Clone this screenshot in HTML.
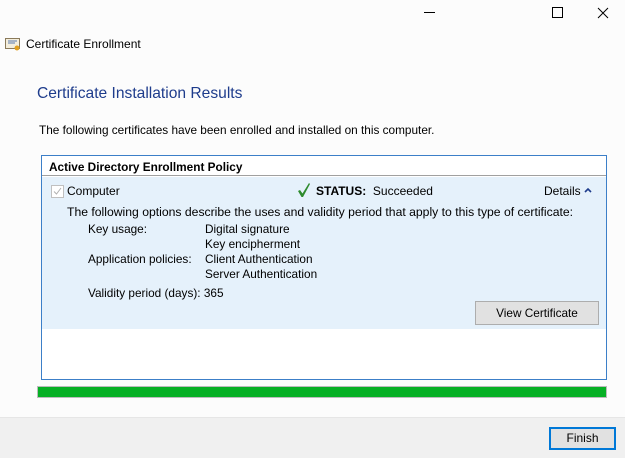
<!DOCTYPE html>
<html><head><style>
body{margin:0;width:625px;height:457px;background:#fcfcfc;font-family:"Liberation Sans",sans-serif;font-size:12px;color:#000;position:relative;overflow:hidden}
.a{position:absolute;white-space:nowrap}
</style></head><body>
<div class="a" style="left:424px;top:12px;width:11px;height:1px;background:#000"></div>
<div class="a" style="left:552px;top:7px;width:9px;height:9px;border:1px solid #000"></div>
<svg class="a" style="left:597px;top:7px" width="12" height="12"><path d="M1 1L11 11M11 1L1 11" stroke="#000" stroke-width="1"/></svg>
<svg class="a" style="left:5px;top:37px" width="16" height="14"><rect x="0.5" y="1.5" width="14" height="10" fill="#f4eedc" stroke="#8a7a5a"/><path d="M3 4h9M3 6h7" stroke="#5a7ab0"/><circle cx="12" cy="11" r="2.5" fill="#e0a020"/></svg>
<div class="a" style="left:26px;top:37px;font-size:12px">Certificate Enrollment</div>
<div class="a" style="left:37px;top:85px;font-size:15.6px;color:#1e3c8c">Certificate Installation Results</div>
<div class="a" style="left:39px;top:123px;font-size:11.8px">The following certificates have been enrolled and installed on this computer.</div>
<div class="a" style="left:41px;top:155px;width:564px;height:223px;border:1px solid #3c7fc8;background:#fff"></div>
<div class="a" style="left:42px;top:175px;width:564px;height:1px;background:#a0a0a0"></div>
<div class="a" style="left:49px;top:160px;font-weight:bold;font-size:11.8px">Active Directory Enrollment Policy</div>
<div class="a" style="left:42px;top:177px;width:564px;height:152px;background:#e5f1fb"></div>
<div class="a" style="left:51px;top:185px;width:11px;height:11px;border:1px solid #c0c0c0;background:#fff"></div>
<svg class="a" style="left:52px;top:186px" width="11" height="11"><path d="M2 5.5L4.5 8L9 2" stroke="#b0b0b0" fill="none"/></svg>
<div class="a" style="left:67px;top:184px;font-size:12px">Computer</div>
<svg class="a" style="left:297px;top:182px" width="14" height="16"><path d="M1 9L3 8L5.5 11.5L12 1L13 2L6 15L4.5 15Z" fill="#2e8b2e"/></svg>
<div class="a" style="left:316px;top:184px;font-size:12px"><b>STATUS:</b>&nbsp; Succeeded</div>
<div class="a" style="left:544px;top:184px;font-size:12px">Details</div>
<svg class="a" style="left:584px;top:187px" width="8" height="6"><path d="M1 5L4 2L7 5" stroke="#1e3c8c" stroke-width="1.6" fill="none"/></svg>
<div class="a" style="left:67px;top:205px;font-size:12.2px">The following options describe the uses and validity period that apply to this type of certificate:</div>
<div class="a" style="left:88px;top:222px;font-size:11.8px;line-height:15px">Key usage:<br><br>Application policies:<br><br><span style="position:relative;top:4px">Validity period (days): 365</span></div>
<div class="a" style="left:205px;top:222px;font-size:11.8px;line-height:15px">Digital signature<br>Key encipherment<br>Client Authentication<br>Server Authentication</div>
<div class="a" style="left:475px;top:301px;width:122px;height:22px;border:1px solid #adadad;background:#e1e1e1;text-align:center;line-height:22px;font-size:11.8px">View Certificate</div>
<div class="a" style="left:37px;top:386px;width:568px;height:10px;background:#06b025;border:1px solid #bcbcbc"></div>
<div class="a" style="left:0;top:417px;width:625px;height:40px;background:#f0f0f0;border-top:1px solid #e6e6e6"></div>
<div class="a" style="left:549px;top:427px;width:63px;height:19px;border:2px solid #0078d7;background:#e1e1e1;text-align:center;line-height:19px;font-size:12px">Finish</div>
</body></html>
